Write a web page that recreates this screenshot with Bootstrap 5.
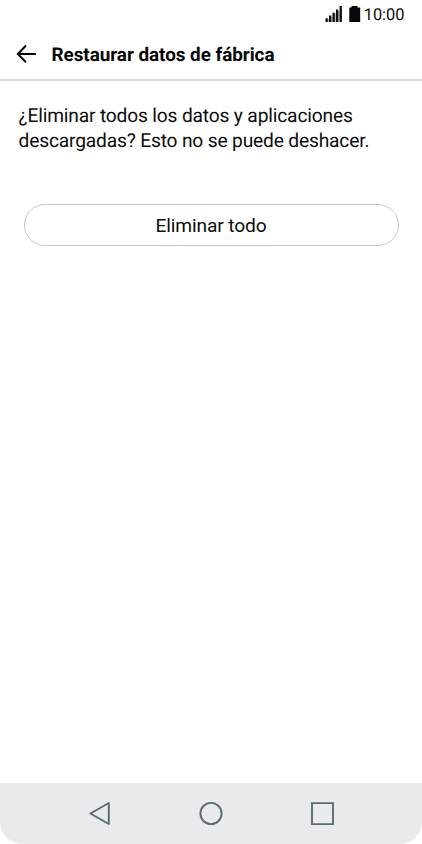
<!DOCTYPE html>
<html lang="es">
<head>
<meta charset="utf-8">
<meta name="viewport" content="width=device-width, initial-scale=1">
<title>Restaurar datos de fábrica</title>
<link href="https://cdn.jsdelivr.net/npm/bootstrap@5.3.0/dist/css/bootstrap.min.css" rel="stylesheet">
<style>
body { font-family: Roboto, "Liberation Sans", sans-serif; color: #0c0c0c; background: #fff; text-rendering: geometricPrecision; }
.status-bar { height: 30px; padding-right: 17.5px; }
.status-bar .clock { font-size: 16.4px; line-height: 32px; margin-left: 3px; }
.title-bar { height: 51px; padding-left: 16px; border-bottom: 2px solid #dedede; }
.title-bar svg { margin-bottom: 2px; }
.title-bar h1 { font-size: 18.9px; line-height: 24px; font-weight: 700; letter-spacing: -.05px; margin-left: 14.5px; color: #050505; }
.content { padding: 22px 18.5px 0; }
.message { font-size: 19.2px; line-height: 25px; letter-spacing: -.17px; }
.btn-erase { margin: 51px 5px 0; width: 375px; height: 42px; border: 1.5px solid #c6c6c6; font-size: 19.2px; line-height: 25px; letter-spacing: -.15px; color: #0c0c0c; }
.nav-keys { height: 61px; background: #e8eaee; border-radius: 0 0 22px 22px; }
</style>
</head>
<body class="d-flex flex-column vh-100 overflow-hidden">
<div class="status-bar d-flex justify-content-end align-items-start">
  <svg width="36" height="30" viewBox="0 0 36 30" aria-hidden="true">
    <path fill="#bbb" d="M2.5 19H4v3H2.500zM6 17h1.500v5H6zM9.500 14H11v8H9.500zM13 11h1.700v11H13z"/>
    <path fill="#111" d="M.5 18.200h2.300V22H.5zM4 15.500h2.300V22H4zM7.500 12.700h2.300V22H7.500zM11 9.500h2.300V22H11zM14.600 6h2.300v16h-2.300z"/>
    <path fill="#080808" d="M24.3 7.500h2.200V6.100h6v1.400h2.700V22H24.300z"/>
  </svg>
  <span class="clock">10:00</span>
</div>
<header class="title-bar d-flex align-items-center">
  <svg width="21" height="20" viewBox="0 0 21 20" fill="none" stroke="#080808" stroke-width="2" aria-hidden="true"><path d="M10 1.5 1.8 10l8.2 8.2M1.8 10h18"/></svg>
  <h1 class="mb-0">Restaurar datos de fábrica</h1>
</header>
<main class="content flex-grow-1">
  <p class="message mb-0">¿Eliminar todos los datos y aplicaciones<br>descargadas? Esto no se puede deshacer.</p>
  <button type="button" class="btn btn-erase rounded-pill p-0">Eliminar todo</button>
</main>
<nav class="nav-keys d-flex justify-content-center align-items-center flex-shrink-0" aria-label="Navegación">
  <svg width="250" height="30" viewBox="0 0 250 30" fill="none" stroke="#5b6b73" stroke-width="1.9" aria-hidden="true">
    <path d="M22.8 4v21L4.4 14.5z" stroke-linejoin="round"/>
    <circle cx="125" cy="14.5" r="10.6"/>
    <path d="M226 4.1h21v21h-21z"/>
  </svg>
</nav>
<script src="https://cdn.jsdelivr.net/npm/bootstrap@5.3.0/dist/js/bootstrap.bundle.min.js"></script>
</body>
</html>
